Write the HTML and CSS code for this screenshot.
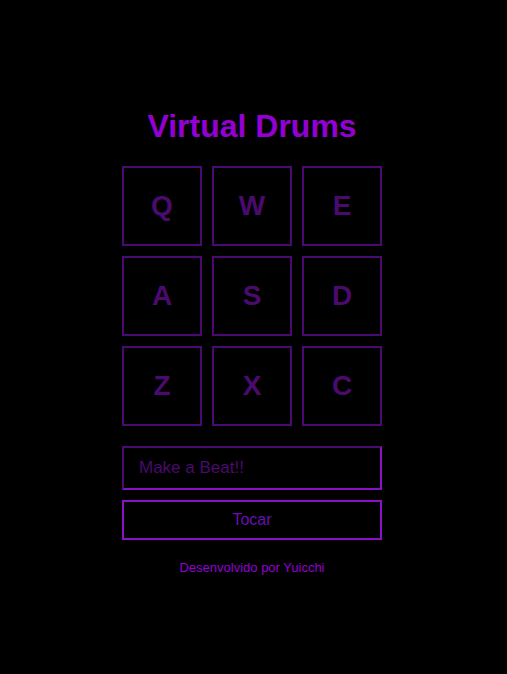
FILE: index.html
```html
<!DOCTYPE html>
<html lang="pt-BR">
<head>
<meta charset="utf-8">
<title>Virtual Drums</title>
<link rel="stylesheet" href="styles.css">
</head>
<body>
<main class="app">
  <h1 class="title">Virtual Drums</h1>
  <div class="keys">
    <div class="key">Q</div>
    <div class="key">W</div>
    <div class="key">E</div>
    <div class="key">A</div>
    <div class="key">S</div>
    <div class="key">D</div>
    <div class="key">Z</div>
    <div class="key">X</div>
    <div class="key">C</div>
  </div>
  <input class="beat" type="text" placeholder="Make a Beat!!">
  <button class="play" type="button">Tocar</button>
  <p class="footer">Desenvolvido por Yuicchi</p>
</main>
</body>
</html>
```
FILE: styles.css
```css
html, body {
  margin: 0;
  padding: 0;
  background: #000;
  font-family: "Liberation Sans", Arial, sans-serif;
}
body {
  padding-right: 3px;
}
.app {
  width: 260px;
  margin: 0 auto;
  padding-top: 107px;
  display: flex;
  flex-direction: column;
  align-items: stretch;
}
.title {
  margin: 0 0 21px;
  font-size: 32px;
  line-height: 38px;
  font-weight: bold;
  text-align: center;
  color: #9400d3;
}
.keys {
  display: grid;
  grid-template-columns: repeat(3, 80px);
  grid-auto-rows: 80px;
  gap: 10px;
  justify-content: space-between;
}
.key {
  box-sizing: border-box;
  border: 2px solid #4a0a72;
  display: flex;
  align-items: center;
  justify-content: center;
  color: #4a0a6e;
  font-size: 28px;
  font-weight: bold;
}
.beat {
  box-sizing: border-box;
  margin-top: 20px;
  height: 44px;
  width: 100%;
  padding: 0 15px;
  background: #000;
  border: 2px solid #8a10c8;
  border-top-color: #4a0a6e;
  border-left-color: #4a0a6e;
  color: #4a0a6e;
  font-family: "Liberation Sans", Arial, sans-serif;
  font-size: 17px;
  outline: none;
}
.beat::placeholder {
  color: #4a0a6e;
  opacity: 1;
}
.play {
  box-sizing: border-box;
  margin-top: 10px;
  height: 40px;
  width: 100%;
  background: #000;
  border: 2px solid #8a10c8;
  color: #6a0fb0;
  font-family: "Liberation Sans", Arial, sans-serif;
  font-size: 16px;
  cursor: pointer;
}
.footer {
  margin: 20px 0 0;
  text-align: center;
  font-size: 13px;
  font-weight: normal;
  color: #9400d3;
}
```
